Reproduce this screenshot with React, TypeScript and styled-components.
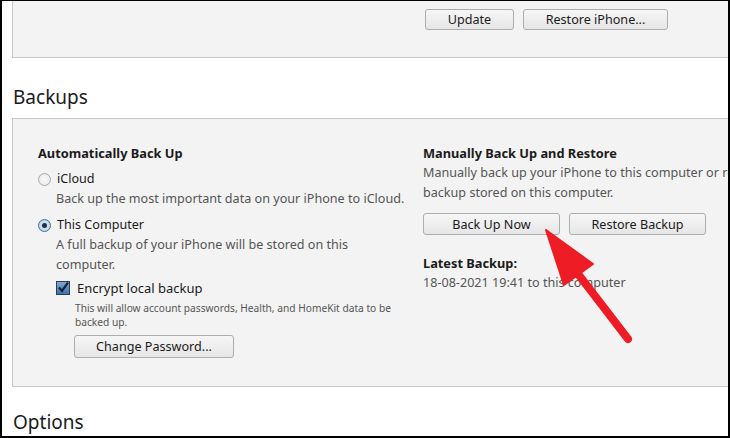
import * as React from 'react';
import styled, { createGlobalStyle } from 'styled-components';

const GlobalStyle = createGlobalStyle`
  html, body {
    margin: 0;
    padding: 0;
    background: #ffffff;
  }
  * {
    box-sizing: border-box;
  }
`;

const Frame = styled.div`
  position: relative;
  width: 730px;
  height: 438px;
  overflow: hidden;
  background: #ffffff;
  border: 2px solid #000000;
  border-top-width: 1px;
  font-family: 'Noto Sans', 'Open Sans', sans-serif;
  color: #1b1b1b;
`;

const Panel = styled.section<{ $height: number }>`
  margin-left: 10px;
  width: 820px;
  height: ${(p) => p.$height}px;
  background: #f3f3f3;
  border: 1px solid #c8c8c8;
`;

const TopPanel = styled(Panel)`
  border-top: none;
  display: flex;
  gap: 9px;
  padding: 8px 0 0 412px;
`;

const SectionTitle = styled.h2<{ $top: number }>`
  margin: 0;
  padding: ${(p) => p.$top}px 0 7px 11px;
  font-size: 19px;
  font-weight: 400;
  line-height: 28px;
  color: #1b1b1b;
`;

const Button = styled.button<{ $width: number; $height?: number }>`
  width: ${(p) => p.$width}px;
  height: ${(p) => p.$height ?? 21}px;
  padding: 0;
  font-family: inherit;
  font-size: 12.6px;
  color: #1b1b1b;
  border: 1px solid #adadad;
  border-radius: 3px;
  background: linear-gradient(#f6f6f6, #e6e6e6);
  flex-shrink: 0;
`;

const BackupsBody = styled.div`
  display: grid;
  grid-template-columns: 385px 1fr;
  padding: 24px 0 0 25px;
`;

const Column = styled.div`
  display: flex;
  flex-direction: column;
`;

const Heading = styled.div<{ $top?: number }>`
  margin-top: ${(p) => p.$top ?? 0}px;
  font-size: 12.8px;
  font-weight: 700;
  line-height: 20px;
`;

const OptionRow = styled.label`
  display: flex;
  align-items: center;
  gap: 6px;
  font-size: 12.6px;
  line-height: 20px;
  margin-top: 6px;
`;

const Description = styled.p<{ $indent?: number; $nowrap?: boolean }>`
  margin: 0;
  padding-left: ${(p) => p.$indent ?? 0}px;
  font-size: 12.6px;
  line-height: 20px;
  color: #555555;
  white-space: ${(p) => (p.$nowrap ? 'nowrap' : 'normal')};
`;

const Radio = styled.span<{ $checked?: boolean }>`
  position: relative;
  width: 13px;
  height: 13px;
  border-radius: 50%;
  border: 1px solid ${(p) => (p.$checked ? '#3c6e99' : '#a8a8a8')};
  background: ${(p) =>
    p.$checked ? 'radial-gradient(#dbe9f5, #b7d0e6)' : 'radial-gradient(#fbfbfb, #e4e4e4)'};
  flex-shrink: 0;
  &::after {
    content: '';
    display: ${(p) => (p.$checked ? 'block' : 'none')};
    position: absolute;
    left: 3px;
    top: 3px;
    width: 5px;
    height: 5px;
    border-radius: 50%;
    background: #1f2f44;
  }
`;

const SubOption = styled.div`
  padding-left: 18px;
  margin-top: 3px;
  display: flex;
  flex-direction: column;
`;

const CheckRow = styled.label`
  display: flex;
  align-items: center;
  gap: 7px;
  font-size: 13px;
  line-height: 20px;
`;

const CheckBox = styled.span`
  display: inline-flex;
  width: 14px;
  height: 14px;
  border: 1px solid #2c3e55;
  background: linear-gradient(#7fa7cf, #3f73a8);
  flex-shrink: 0;
`;

const SmallNote = styled.p`
  margin: 3px 0 0;
  padding-left: 19px;
  font-size: 10.2px;
  line-height: 14px;
  color: #555555;
`;

const ButtonRow = styled.div<{ $top: number; $left?: number }>`
  display: flex;
  gap: 9px;
  margin-top: ${(p) => p.$top}px;
  padding-left: ${(p) => p.$left ?? 0}px;
`;

const Arrow = styled.svg`
  position: absolute;
  left: 0;
  top: 0;
  pointer-events: none;
`;

export default function App() {
  return (
    <>
      <GlobalStyle />
      <Frame>
        <TopPanel $height={57}>
          <Button $width={89}>Update</Button>
          <Button $width={145}>Restore iPhone...</Button>
        </TopPanel>

        <SectionTitle $top={25}>Backups</SectionTitle>

        <Panel $height={269}>
          <BackupsBody>
            <Column>
              <Heading>Automatically Back Up</Heading>
              <OptionRow>
                <Radio />
                iCloud
              </OptionRow>
              <Description $indent={18}>Back up the most important data on your iPhone to iCloud.</Description>
              <OptionRow>
                <Radio $checked />
                This Computer
              </OptionRow>
              <Description $indent={18}>
                A full backup of your iPhone will be stored on this
                <br />
                computer.
              </Description>
              <SubOption>
                <CheckRow>
                  <CheckBox>
                    <svg width="12" height="12" viewBox="0 0 12 12">
                      <path d="M2 5.5 L5 9 L11 0.5" fill="none" stroke="#14243a" strokeWidth="2.2" />
                    </svg>
                  </CheckBox>
                  Encrypt local backup
                </CheckRow>
                <SmallNote>
                  This will allow account passwords, Health, and HomeKit data to be
                  <br />
                  backed up.
                </SmallNote>
                <ButtonRow $top={6} $left={18}>
                  <Button $width={160} $height={23}>
                    Change Password...
                  </Button>
                </ButtonRow>
              </SubOption>
            </Column>

            <Column>
              <Heading>Manually Back Up and Restore</Heading>
              <Description $nowrap>
                Manually back up your iPhone to this computer or restore a
                <br />
                backup stored on this computer.
              </Description>
              <ButtonRow $top={10}>
                <Button $width={137} $height={22}>
                  Back Up Now
                </Button>
                <Button $width={137} $height={22}>
                  Restore Backup
                </Button>
              </ButtonRow>
              <Heading $top={18}>Latest Backup:</Heading>
              <Description>18-08-2021 19:41 to this computer</Description>
            </Column>
          </BackupsBody>
        </Panel>

        <SectionTitle $top={21}>Options</SectionTitle>

        <Arrow width="730" height="438" viewBox="0 0 730 438">
          <line x1="560" y1="252" x2="626" y2="338" stroke="#ee1c25" strokeWidth="8" strokeLinecap="round" />
          <polygon points="544,229 591,263 562,284" fill="#ee1c25" stroke="#ee1c25" strokeWidth="2" strokeLinejoin="round" />
        </Arrow>
      </Frame>
    </>
  );
}
